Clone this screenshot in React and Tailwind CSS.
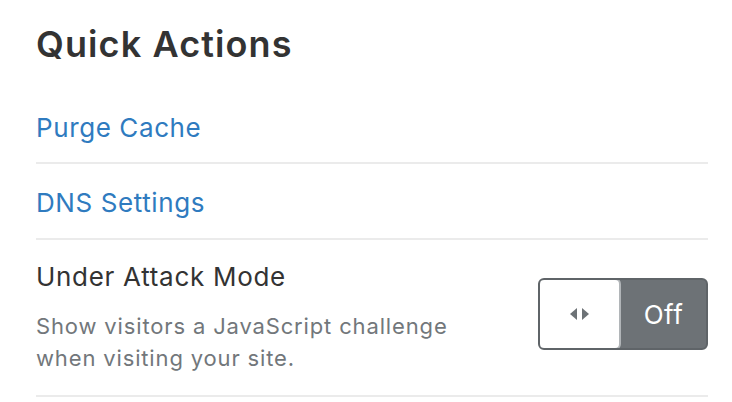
export default function App() {
  return (
    <div
      className="w-[732px] h-[402px] bg-white pl-9 pr-6 pt-5 overflow-hidden"
      style={{ fontFamily: "Inter, 'Noto Sans', sans-serif" }}
    >
      <h2 className="text-[36px] leading-[48px] font-semibold text-[#333333] tracking-[1.1px]">
        Quick Actions
      </h2>

      <div className="mt-5">
        <div className="h-[76px] pt-[4px] flex items-center border-b-2 border-[#ebebeb]">
          <a href="#" className="text-[26px] text-[#2f7bbf] tracking-[0.6px]">
            Purge Cache
          </a>
        </div>
        <div className="h-[76px] pt-[3px] flex items-center border-b-2 border-[#ebebeb]">
          <a href="#" className="text-[26px] text-[#2f7bbf] tracking-[0.6px]">
            DNS Settings
          </a>
        </div>
        <div className="h-[157px] flex items-start justify-between border-b-2 border-[#ebebeb] pt-[21px]">
          <div>
            <div className="text-[26px] leading-[32px] text-[#333333] tracking-[0.7px]">
              Under Attack Mode
            </div>
            <p className="mt-[17px] text-[22px] leading-[32px] text-[#72777b] tracking-[0.85px] w-[450px]">
              Show visitors a JavaScript challenge when visiting your site.
            </p>
          </div>
          <button className="mt-[17px] flex h-[72px] w-[170px] rounded-md bg-[#6d7276] border-2 border-[#5f6468] overflow-hidden">
            <span className="w-[83px] -ml-[2px] -mt-[2px] h-[72px] bg-white border-2 border-[#b1b5b8] rounded-md flex items-center justify-center gap-[3px]">
              <svg width="8" height="12" viewBox="0 0 8 12">
                <path d="M7 0 L0 6 L7 12 Z" fill="#6d7276" />
              </svg>
              <svg width="8" height="12" viewBox="0 0 8 12">
                <path d="M1 0 L8 6 L1 12 Z" fill="#6d7276" />
              </svg>
            </span>
            <span className="flex-1 h-full flex items-center justify-center text-white text-[26px] tracking-[0.5px]">
              Off
            </span>
          </button>
        </div>
      </div>
    </div>
  );
}
